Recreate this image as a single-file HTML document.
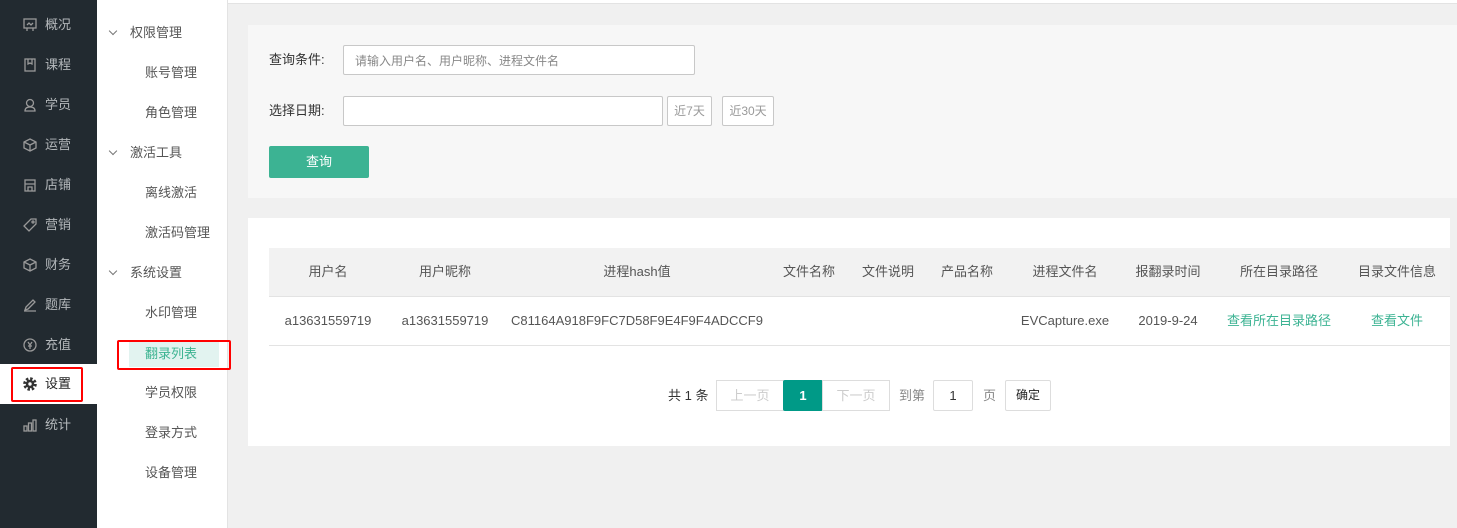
<!DOCTYPE html>
<html><head><meta charset="utf-8"><style>
*{margin:0;padding:0;box-sizing:border-box}
body{width:1457px;height:528px;overflow:hidden;background:#f0f0f0;font-family:"Liberation Sans","Noto Sans CJK SC",sans-serif;font-size:13px;line-height:18px;color:#555;position:relative}
.a{position:absolute}
#side{left:0;top:0;width:97px;height:528px;background:#222a30}
.ni{position:absolute;left:0;width:97px;height:40px;line-height:40px;color:#b4b8bb;font-size:13px}
.ni svg{position:absolute;left:23px;top:13px}
.ni span{position:absolute;left:45px}
#sub{left:97px;top:0;width:131px;height:528px;background:#fff;border-right:1px solid #e3e3e3}
.g{position:absolute;left:0;color:#555;font-size:13px;height:18px}
.g i{position:absolute;left:13px;top:4px;width:6px;height:6px;border-right:1px solid #777;border-bottom:1px solid #777;transform:rotate(45deg)}
.g span{position:absolute;left:33px;white-space:nowrap}
.s{position:absolute;left:48px;color:#555;white-space:nowrap}
.inp{position:absolute;background:#fff;border:1px solid #c8c8c8;border-radius:2px}
.th{position:absolute;top:263px;transform:translateX(-50%);white-space:nowrap;color:#555}
.td{position:absolute;top:312px;transform:translateX(-50%);white-space:nowrap;color:#555}
.pb{position:absolute;top:380px;height:31px;border:1px solid #ddd;background:#fff;text-align:center;line-height:29px;color:#ccc}
</style></head><body>
<div class="a" style="left:228px;top:0;width:1229px;height:4px;background:#fff;border-bottom:1px solid #e3e3e3"></div>
<div id="side" class="a">
<div class="ni" style="top:5px"><svg width="14" height="14" viewBox="0 0 14 14" fill="none" stroke="#999" stroke-width="1.3"><rect x="1" y="1" width="12" height="9"/><path d="M4 10v3M10 10v3M4 7l2-2 2 2 2-2"/></svg><span>概况</span></div>
<div class="ni" style="top:45px"><svg width="14" height="14" viewBox="0 0 14 14" fill="none" stroke="#999" stroke-width="1.3"><rect x="2" y="1" width="10" height="12"/><path d="M5 1v5l2-1 2 1V1"/></svg><span>课程</span></div>
<div class="ni" style="top:85px"><svg width="14" height="14" viewBox="0 0 14 14" fill="none" stroke="#999" stroke-width="1.3"><circle cx="7" cy="5" r="3.5"/><path d="M2 13c0-3 2-4 5-4s5 1 5 4z"/></svg><span>学员</span></div>
<div class="ni" style="top:125px"><svg width="14" height="14" viewBox="0 0 14 14" fill="none" stroke="#999" stroke-width="1.3"><path d="M7 1l6 3v6l-6 3-6-3V4zM1 4l6 3 6-3M7 7v6"/></svg><span>运营</span></div>
<div class="ni" style="top:165px"><svg width="14" height="14" viewBox="0 0 14 14" fill="none" stroke="#999" stroke-width="1.3"><rect x="2" y="2" width="10" height="11"/><path d="M2 6h10M5 13V9h4v4"/></svg><span>店铺</span></div>
<div class="ni" style="top:205px"><svg width="14" height="14" viewBox="0 0 14 14" fill="none" stroke="#999" stroke-width="1.3"><path d="M8 1h5v5l-7 7-5-5z"/><circle cx="10" cy="4" r="1"/></svg><span>营销</span></div>
<div class="ni" style="top:245px"><svg width="14" height="14" viewBox="0 0 14 14" fill="none" stroke="#999" stroke-width="1.3"><path d="M7 1l6 3v6l-6 3-6-3V4zM1 4l6 3 6-3M7 7v6"/></svg><span>财务</span></div>
<div class="ni" style="top:285px"><svg width="14" height="14" viewBox="0 0 14 14" fill="none" stroke="#999" stroke-width="1.3"><path d="M2 12l1-3 7-7 2 2-7 7zM1 13h12"/></svg><span>题库</span></div>
<div class="ni" style="top:325px"><svg width="14" height="14" viewBox="0 0 14 14" fill="none" stroke="#999" stroke-width="1.3"><circle cx="7" cy="7" r="6"/><path d="M5 4l2 3 2-3M7 7v4M5 8h4"/></svg><span>充值</span></div>
<div class="ni" style="top:364px;background:#fff;color:#222"><svg width="14" height="14" viewBox="0 0 14 14"><circle cx="7" cy="7" r="5.3" fill="none" stroke="#333" stroke-width="3" stroke-dasharray="2.4 1.76"/><circle cx="7" cy="7" r="4.2" fill="#333"/><circle cx="7" cy="7" r="1.7" fill="#fff"/></svg><span>设置</span></div>
<div class="ni" style="top:405px"><svg width="14" height="14" viewBox="0 0 14 14" fill="none" stroke="#999" stroke-width="1.3"><rect x="1" y="8" width="3" height="5"/><rect x="5.5" y="5" width="3" height="8"/><rect x="10" y="2" width="3" height="11"/></svg><span>统计</span></div>
</div>
<div class="a" style="left:11px;top:367px;width:72px;height:35px;border:2px solid #f00;border-radius:2px"></div>
<div id="sub" class="a">
<div class="g" style="top:24px;width:130px"><i></i><span>权限管理</span></div>
<div class="s" style="top:64px">账号管理</div>
<div class="s" style="top:104px">角色管理</div>
<div class="g" style="top:144px;width:130px"><i></i><span>激活工具</span></div>
<div class="s" style="top:184px">离线激活</div>
<div class="s" style="top:224px">激活码管理</div>
<div class="g" style="top:264px;width:130px"><i></i><span>系统设置</span></div>
<div class="s" style="top:304px">水印管理</div>
<div class="a" style="left:32px;top:341px;width:90px;height:26px;background:#e2f3f0"></div>
<div class="s" style="top:345px;color:#3cb391">翻录列表</div>
<div class="s" style="top:384px">学员权限</div>
<div class="s" style="top:424px">登录方式</div>
<div class="s" style="top:464px">设备管理</div>
</div>
<div class="a" style="left:117px;top:340px;width:114px;height:30px;border:2px solid #f00;border-radius:2px"></div>
<div class="a" style="left:248px;top:25px;width:1209px;height:173px;background:#f7f7f7"></div>
<div class="a" style="left:269px;top:51px;color:#333">查询条件:</div>
<div class="inp" style="left:343px;top:45px;width:352px;height:30px"><span class="a" style="left:11px;top:6px;color:#888;font-size:12px">请输入用户名、用户昵称、进程文件名</span></div>
<div class="a" style="left:269px;top:102px;color:#333">选择日期:</div>
<div class="inp" style="left:343px;top:96px;width:320px;height:30px"></div>
<div class="inp" style="left:667px;top:96px;width:45px;height:30px;text-align:center;line-height:28px;color:#999;font-size:12px">近7天</div>
<div class="inp" style="left:722px;top:96px;width:52px;height:30px;text-align:center;line-height:28px;color:#999;font-size:12px">近30天</div>
<div class="a" style="left:269px;top:146px;width:100px;height:32px;background:#3cb393;border-radius:2px;color:#fff;text-align:center;line-height:32px">查询</div>
<div class="a" style="left:248px;top:218px;width:1202px;height:228px;background:#fff"></div>
<div class="a" style="left:269px;top:248px;width:1181px;height:49px;background:#f2f2f2;border-bottom:1px solid #e3e3e3"></div>
<div class="a" style="left:269px;top:345px;width:1181px;height:1px;background:#e3e3e3"></div>
<div class="th" style="left:328px">用户名</div><div class="th" style="left:445px">用户昵称</div><div class="th" style="left:637px">进程hash值</div><div class="th" style="left:809px">文件名称</div><div class="th" style="left:888px">文件说明</div><div class="th" style="left:967px">产品名称</div><div class="th" style="left:1065px">进程文件名</div><div class="th" style="left:1168px">报翻录时间</div><div class="th" style="left:1279px">所在目录路径</div><div class="th" style="left:1397px">目录文件信息</div>
<div class="td" style="left:328px">a13631559719</div><div class="td" style="left:445px">a13631559719</div><div class="td" style="left:637px">C81164A918F9FC7D58F9E4F9F4ADCCF9</div><div class="td" style="left:1065px">EVCapture.exe</div><div class="td" style="left:1168px">2019-9-24</div><div class="td" style="left:1279px;color:#3cb393">查看所在目录路径</div><div class="td" style="left:1397px;color:#3cb393">查看文件</div>
<div class="a" style="left:668px;top:387px;color:#333">共 1 条</div>
<div class="pb" style="left:716px;width:68px">上一页</div>
<div class="pb" style="left:783px;width:40px;background:#009a87;border-color:#009a87;color:#fff;font-weight:bold;border-radius:2px">1</div>
<div class="pb" style="left:822px;width:68px">下一页</div>
<div class="a" style="left:899px;top:387px;color:#888">到第</div>
<div class="pb" style="left:933px;width:40px;color:#333;border-radius:2px">1</div>
<div class="a" style="left:983px;top:387px;color:#888">页</div>
<div class="pb" style="left:1005px;width:46px;color:#222;font-size:12px;border-radius:2px">确定</div>
</body></html>
